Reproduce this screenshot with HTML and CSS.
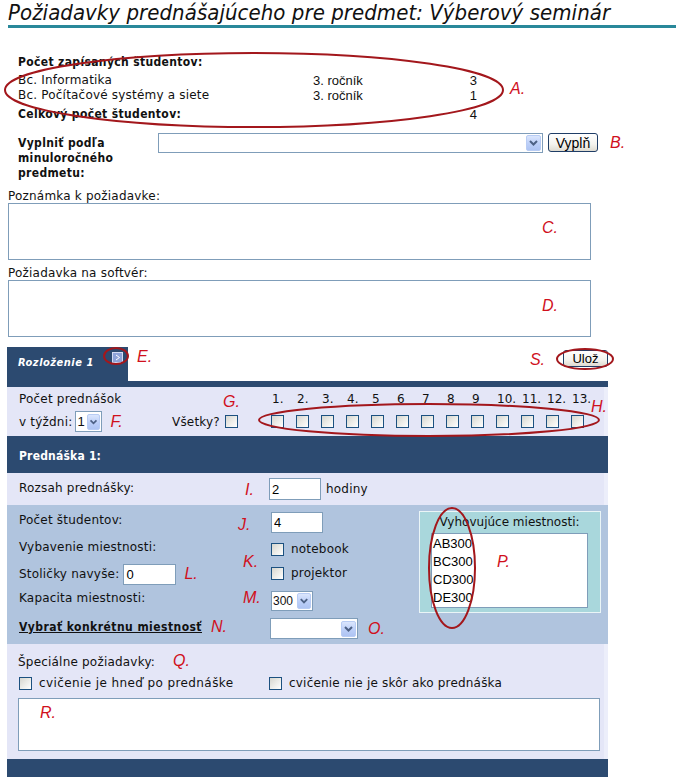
FILE: index.html
```html
<!DOCTYPE html>
<html lang="sk">
<head>
<meta charset="utf-8">
<title>Požiadavky prednášajúceho</title>
<link rel="stylesheet" href="styles.css">
</head>
<body>
<div class="page">
  <h1 class="title">Požiadavky prednášajúceho pre predmet: Výberový seminár</h1>

  <section class="students">
    <div class="hd">Počet zapísaných študentov:</div>
    <div class="nm">Bc. Informatika</div><div class="yr">3. ročník</div><div class="ct">3</div>
    <div class="nm">Bc. Počítačové systémy a siete</div><div class="yr">3. ročník</div><div class="ct">1</div>
    <div class="tot">Celkový počet študentov:</div><div class="ct ct-tot">4</div>
  </section>

  <div class="fill">
    <div class="fill-label">Vyplniť podľa<br>minuloročného<br>predmetu:</div>
    <div class="combo combo-wide"><span class="combo-val"></span><span class="combo-btn"><svg width="13" height="14" viewBox="0 0 13 14"><polyline points="3,5 6.5,8.5 10,5" fill="none" stroke="#4d6185" stroke-width="2"/></svg></span></div>
    <button class="btn btn-fill">Vyplň</button>
    <span class="anno anno-b">B.</span>
  </div>

  <div class="note">
    <div class="note-label">Poznámka k požiadavke:</div>
    <textarea></textarea>
  </div>
  <div class="note">
    <div class="note-label">Požiadavka na softvér:</div>
    <textarea></textarea>
  </div>

  <div class="layout">
    <div class="tabrow">
      <div class="tab">
        <span class="tab-text">Rozloženie 1</span>
        <svg class="tab-icon" width="11" height="11" viewBox="0 0 11 11"><rect x="0.5" y="0.5" width="10" height="10" fill="#8ea3d9" stroke="#d3dcf3"/><polyline points="4,3 7.5,5.5 4,8" fill="none" stroke="#fff" stroke-width="1"/></svg>
      </div>
      <span class="anno anno-e">E.</span>
      <span class="spacer"></span>
      <span class="anno anno-s">S.</span>
      <button class="btn btn-save">Ulož</button>
    </div>

    <div class="panel">
      <div class="strip"></div>

      <div class="count lav">
        <div class="count-left">
          <div class="r1">Počet prednášok</div>
          <div class="r2">v týždni: <div class="combo combo-one"><span class="combo-val">1</span><span class="combo-btn"><svg width="13" height="14" viewBox="0 0 13 14"><polyline points="3,5 6.5,8.5 10,5" fill="none" stroke="#4d6185" stroke-width="2"/></svg></span></div><span class="anno anno-f">F.</span></div>
        </div>
        <div class="count-all">
          <div class="r1"></div>
          <div class="r2">Všetky?<span class="cb"></span></div>
        </div>
        <div class="weeks">
          <span>1.</span><span>2.</span><span>3.</span><span>4.</span><span>5</span><span>6</span><span>7</span><span>8</span><span>9</span><span>10.</span><span>11.</span><span>12.</span><span>13.</span>
          <span class="cb"></span><span class="cb"></span><span class="cb"></span><span class="cb"></span><span class="cb"></span><span class="cb"></span><span class="cb"></span><span class="cb"></span><span class="cb"></span><span class="cb"></span><span class="cb"></span><span class="cb"></span><span class="cb"></span>
        </div>
      </div>

      <div class="head">Prednáška 1:</div>

      <div class="range lav">
        <div class="range-label">Rozsah prednášky:</div>
        <input class="field" type="text" value="2">
        <span class="unit">hodiny</span>
      </div>

      <div class="rooms">
        <div class="rooms-left">
          <div class="rl rl1">Počet študentov:</div>
          <div class="rl rl2">Vybavenie miestnosti:</div>
          <div class="rl rl3">Stoličky navyše:<input class="field field-chairs" type="text" value="0"><span class="anno anno-l">L.</span></div>
          <div class="rl rl4">Kapacita miestnosti:</div>
          <div class="rl rl5"><a class="pick">Vybrať konkrétnu miestnosť</a><span class="anno anno-n">N.</span></div>
        </div>
        <div class="rooms-mid">
          <input class="field field-stud" type="text" value="4">
          <div class="chk chk1"><span class="cb"></span>notebook</div>
          <div class="chk chk2"><span class="cb"></span>projektor</div>
          <div class="combo combo-cap"><span class="combo-val">300</span><span class="combo-btn"><svg width="13" height="14" viewBox="0 0 13 14"><polyline points="3,5 6.5,8.5 10,5" fill="none" stroke="#4d6185" stroke-width="2"/></svg></span></div>
          <div class="pickrow"><div class="combo combo-room"><span class="combo-val"></span><span class="combo-btn"><svg width="13" height="14" viewBox="0 0 13 14"><polyline points="3,5 6.5,8.5 10,5" fill="none" stroke="#4d6185" stroke-width="2"/></svg></span></div><span class="anno anno-o">O.</span></div>
        </div>
        <div class="roombox">
          <div class="roombox-title">Vyhovujúce miestnosti:</div>
          <div class="listbox">
            <div>AB300</div>
            <div>BC300</div>
            <div>CD300</div>
            <div>DE300</div>
          </div>
        </div>
      </div>

      <div class="special lav">
        <div class="special-label">Špeciálne požiadavky: <span class="anno anno-q">Q.</span></div>
        <div class="special-checks">
          <div class="chk chk-a"><span class="cb"></span>cvičenie je hneď po prednáške</div>
          <div class="chk"><span class="cb"></span>cvičenie nie je skôr ako prednáška</div>
        </div>
        <textarea class="special-text"></textarea>
      </div>

      <div class="foot"></div>
    </div>
  </div>

  <svg class="marks" width="676" height="777" viewBox="0 0 676 777">
    <g fill="none" stroke="#a3171c" stroke-width="2">
      <ellipse cx="254" cy="90" rx="249" ry="37"/>
      <ellipse cx="116" cy="356" rx="12" ry="8"/>
      <ellipse cx="585" cy="359" rx="28" ry="10"/>
      <ellipse cx="429" cy="420" rx="170" ry="16"/>
      <ellipse cx="452" cy="568" rx="23" ry="60"/>
    </g>
  </svg>

  <span class="anno pin pin-a">A.</span>
  <span class="anno pin pin-c">C.</span>
  <span class="anno pin pin-d">D.</span>
  <span class="anno pin pin-g">G.</span>
  <span class="anno pin pin-h">H.</span>
  <span class="anno pin pin-i">I.</span>
  <span class="anno pin pin-j">J.</span>
  <span class="anno pin pin-k">K.</span>
  <span class="anno pin pin-m">M.</span>
  <span class="anno pin pin-p">P.</span>
  <span class="anno pin pin-r">R.</span>
</div>
</body>
</html>
```

FILE: styles.css
```css
* { box-sizing: border-box; }
html, body { margin: 0; padding: 0; background: #fff; }
body {
  font-family: "DejaVu Sans", sans-serif;
  font-size: 12px;
  letter-spacing: 0.2px;
  color: #111;
}
.page { position: relative; width: 676px; height: 777px; overflow: hidden; }

.bold, .students .hd, .students .tot, .fill-label, .pick, .head, .tab-text {
  font-family: "DejaVu Sans Condensed", "DejaVu Sans", sans-serif;
  font-stretch: condensed;
  font-weight: bold;
  letter-spacing: 0.35px;
}

.title {
  margin: 0 0 0 8px;
  height: 28px;
  border-bottom: 3px solid #29889a;
  font-family: "DejaVu Sans Condensed", "DejaVu Sans", sans-serif;
  font-stretch: condensed;
  font-weight: normal;
  font-style: italic;
  font-size: 22px;
  line-height: 25px;
  letter-spacing: 0.05px;
  white-space: nowrap;
  color: #111;
}

/* students */
.students {
  margin: 26px 0 0 18px;
  display: grid;
  grid-template-columns: 295px 152px 12px;
  grid-template-rows: 19px 15px 15px 19px;
}
.students .hd { grid-column: 1 / 4; line-height: 16px; }
.students .nm { line-height: 15px; }
.students .yr, .students .ct {
  font-family: "Liberation Sans", Arial, sans-serif;
  font-size: 13px;
  line-height: 15px;
  letter-spacing: 0;
}
.students .ct { text-align: right; }
.students .tot { grid-column: 1 / 3; line-height: 15px; align-self: end; }
.students .ct-tot { align-self: end; }

/* fill row */
.fill { display: flex; align-items: flex-start; margin: 11px 0 0 18px; }
.fill-label { width: 140px; padding-top: 3px; line-height: 15px; }

.combo {
  display: flex;
  align-items: center;
  height: 20px;
  border: 1px solid #7f9db9;
  background: #fff;
}
.combo-val {
  flex: 1;
  padding-left: 2px;
  font-family: "Liberation Sans", Arial, sans-serif;
  font-size: 13px;
  line-height: 16px;
  letter-spacing: 0;
}
.combo-btn {
  display: flex;
  align-items: center;
  justify-content: center;
  width: 15px;
  height: 16px;
  margin-right: 1px;
  border: 1px solid #b8ccf4;
  border-radius: 2px;
  background: linear-gradient(180deg, #dbe6fd 0%, #bccff8 55%, #aec4f3 100%);
}
.combo-wide { width: 385px; }

.btn {
  font-family: "Liberation Sans", Arial, sans-serif;
  font-size: 14px;
  letter-spacing: 0;
  color: #000;
  border: 1px solid #1f3d66;
  border-radius: 3px;
  background: linear-gradient(180deg, #ffffff 0%, #f4f3ee 60%, #dedbd0 100%);
  padding: 0;
  margin: 0;
}
.btn-fill { margin-left: 5px; width: 50px; height: 19px; }

.anno {
  color: #d0101c;
  font-family: "Liberation Sans", Arial, sans-serif;
  font-style: italic;
  font-weight: normal;
  font-size: 16px;
  line-height: 18px;
  letter-spacing: 0;
  text-decoration: none;
}
.anno-b { margin-left: 12px; margin-top: 1px; }

/* notes */
.note { margin: 8px 0 0 8px; }
.note + .note { margin-top: 6px; }
.note-label { line-height: 14px; }
.note textarea, .special-text {
  display: block;
  margin: 0;
  border: 1px solid #7f9db9;
  resize: none;
  background: #fff;
}
.note textarea { width: 583px; height: 57px; }

/* layout panel */
.layout { margin: 10px 0 0 7px; width: 601px; }
.tabrow { display: flex; align-items: flex-start; height: 34px; }
.tab {
  display: flex;
  align-items: flex-start;
  width: 121px;
  height: 34px;
  padding: 5px 5px 0 11px;
  background: #2c4a70;
}
.tab-text {
  margin-top: 4px;
  color: #fff;
  font-style: italic;
  font-size: 11px;
  line-height: 14px;
  letter-spacing: 0.5px;
}
.tab-icon { margin-left: auto; }
.anno-e { margin-left: 9px; margin-top: 1px; }
.spacer { flex: 1; }
.anno-s { margin-top: 4px; margin-right: 18px; }
.btn-save { margin-top: 3px; width: 45px; height: 17px; font-size: 13px; line-height: 15px; }

.panel { width: 601px; }
.strip { height: 6px; background: #2c4a70; }
.lav { background: #e4e6f7; border-right: 4px solid #eceefa; }

.count { display: flex; height: 49px; padding: 5px 0 0 12px; }
.count .r1 { height: 19px; line-height: 14px; }
.count .r2 { height: 21px; display: flex; align-items: center; }
.count-left { width: 153px; }
.count-all { width: 99px; }
.combo-one { width: 27px; height: 21px; margin-left: 3px; }
.combo-one .combo-val { padding-left: 1px; }
.combo-one .combo-btn { width: 13px; }
.anno-f { margin-left: 8px; }
.count-all .cb { margin-left: 5px; }
.weeks {
  display: grid;
  grid-template-columns: repeat(13, 25px);
  grid-template-rows: 19px 21px;
  align-items: center;
}
.weeks span:not(.cb) { align-self: start; line-height: 14px; padding-left: 1px; letter-spacing: 0; }

.cb {
  display: inline-block;
  width: 13px;
  height: 13px;
  border: 1px solid #1c5180;
  background: linear-gradient(135deg, #d6d6cf 0%, #eeeeea 55%, #ffffff 100%);
  flex: none;
}

.head {
  height: 37px;
  padding: 13px 0 0 12px;
  background: #2c4a70;
  color: #fff;
  line-height: 14px;
  letter-spacing: 0.2px;
}

.range { display: flex; align-items: center; height: 32px; padding-left: 12px; }
.range-label { width: 250px; margin-top: -3px; }
.field {
  margin: 0;
  padding: 0 0 0 2px;
  border: 1px solid #7f9db9;
  background: #fff;
  font-family: "Liberation Sans", Arial, sans-serif;
  font-size: 13px;
  letter-spacing: 0;
  color: #000;
  outline: none;
}
.range .field { width: 52px; height: 22px; }
.unit { margin-left: 5px; }

.rooms {
  display: flex;
  height: 139px;
  padding-left: 12px;
  background: #b0c4de;
}
.rooms-left { width: 251px; padding-top: 2px; }
.rl { display: flex; align-items: center; }
.rl1 { height: 26px; }
.rl2 { height: 28px; }
.rl3 { height: 26px; }
.rl4 { height: 22px; }
.rl5 { height: 36px; }
.field-chairs { width: 53px; height: 21px; margin-left: 4px; }
.anno-l { margin-left: 8px; }
.pick { color: #111; text-decoration: underline; letter-spacing: 0.45px; }
.anno-n { margin-left: 9px; }

.rooms-mid { width: 149px; padding-top: 7px; display: flex; flex-direction: column; align-items: flex-start; }
.field-stud { width: 52px; height: 21px; margin-left: 1px; }
.chk { display: flex; align-items: center; height: 13px; line-height: 13px; }
.chk .cb { margin-right: 7px; }
.chk1 { margin: 10px 0 0 1px; }
.chk2 { margin: 11px 0 0 1px; }
.combo-cap { width: 42px; height: 20px; margin: 11px 0 0 1px; }
.combo-cap .combo-val { font-size: 12px; padding-left: 1px; }
.combo-cap .combo-btn { width: 14px; }
.pickrow { display: flex; align-items: center; margin-top: 7px; }
.combo-room { width: 88px; height: 21px; }
.anno-o { margin-left: 10px; }

.roombox {
  width: 182px;
  height: 102px;
  margin-top: 6px;
  padding: 0 12px 4px 11px;
  background: #a9d7dc;
  border: 1px solid #eaf5f7;
}
.roombox-title { height: 21px; line-height: 21px; text-align: center; letter-spacing: 0; }
.listbox {
  height: 75px;
  border: 1px solid #7f9db9;
  background: #fff;
  padding: 1px 0 0 1px;
  font-family: "Liberation Sans", Arial, sans-serif;
  font-size: 13px;
  line-height: 18px;
  letter-spacing: 0;
  color: #000;
}

.special { height: 115px; padding: 8px 0 0 11px; }
.special-label { line-height: 14px; }
.anno-q { margin-left: 14px; }
.special-checks { display: flex; margin-top: 7px; padding-left: 1px; }
.chk-a { width: 250px; letter-spacing: 0.4px; }
.special-text { width: 582px; height: 53px; margin-top: 8px; }

.foot { height: 20px; background: #2c4a70; }

/* overlay annotations */
.marks { position: absolute; left: 0; top: 0; pointer-events: none; }
.pin { position: absolute; }
.pin-a { left: 510px; top: 80px; }
.pin-c { left: 542px; top: 219px; }
.pin-d { left: 542px; top: 297px; }
.pin-g { left: 223px; top: 393px; }
.pin-h { left: 591px; top: 398px; }
.pin-i { left: 245px; top: 481px; }
.pin-j { left: 238px; top: 516px; }
.pin-k { left: 243px; top: 553px; }
.pin-m { left: 243px; top: 589px; }
.pin-p { left: 497px; top: 553px; }
.pin-r { left: 40px; top: 704px; }
```
